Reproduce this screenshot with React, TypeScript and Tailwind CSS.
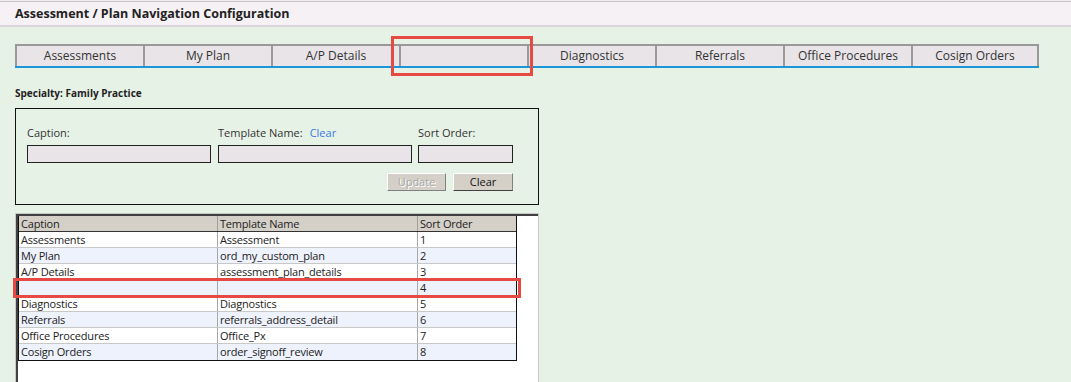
import React from "react";

const tabs = ["Assessments", "My Plan", "A/P Details", "", "Diagnostics", "Referrals", "Office Procedures", "Cosign Orders"];
const rows: [string, string, string][] = [
  ["Assessments", "Assessment", "1"],
  ["My Plan", "ord_my_custom_plan", "2"],
  ["A/P Details", "assessment_plan_details", "3"],
  ["", "", "4"],
  ["Diagnostics", "Diagnostics", "5"],
  ["Referrals", "referrals_address_detail", "6"],
  ["Office Procedures", "Office_Px", "7"],
  ["Cosign Orders", "order_signoff_review", "8"],
];

export default function App() {
  return (
    <div className="relative w-[1071px] h-[382px] overflow-hidden bg-[#e7f2e6]" style={{ fontFamily: '"Open Sans", "DejaVu Sans", sans-serif' }}>
      <div className="bg-[#f0eef0] pt-px">
        <div className="h-[26px] bg-[#f6f1f5] border-t border-b-2 border-t-[#c9c3c9] border-b-[#dcd4dc] flex items-center pl-[15px] pt-[2px]">
          <span className="text-[12.5px] font-bold text-[#222]">Assessment / Plan Navigation Configuration</span>
        </div>
      </div>

      <div className="pl-[15px] pt-[17px]">
        <div className="flex w-[1024px] border-b-2 border-[#1a96d8]">
          {tabs.map((t, i) => (
            <div
              key={i}
              className={`w-[128px] h-[22px] bg-[#e8e4e8] border-t-2 border-l-2 border-[#999999] flex items-center justify-center text-[12px] text-[#333] ${i === tabs.length - 1 ? "border-r-2" : ""}`}
            >
              {t}
            </div>
          ))}
        </div>

        <div className="mt-[18px] text-[10px] font-bold text-[#222] leading-[14px]">Specialty: Family Practice</div>

        <div className="mt-[8px] w-[524px] h-[97px] border border-[#111] pl-[11px] pt-[17px]">
          <div className="flex text-[11px] text-[#333] leading-[14px]">
            <div className="w-[191px]">Caption:</div>
            <div className="w-[200px] flex gap-[7px]">
              <span>Template Name:</span>
              <span className="text-[#3a78e6]">Clear</span>
            </div>
            <div>Sort Order:</div>
          </div>
          <div className="flex mt-[5px]">
            <div className="w-[184px] h-[18px] bg-[#e8e4e8] border border-[#222]" />
            <div className="ml-[7px] w-[194px] h-[18px] bg-[#e8e4e8] border border-[#222]" />
            <div className="ml-[6px] w-[95px] h-[18px] bg-[#e8e4e8] border border-[#222]" />
          </div>
          <div className="flex mt-[10px] ml-[360px] gap-[7px]">
            <div className="w-[59px] h-[18px] bg-[#d4d0c8] border border-t-white border-l-white border-r-[#808080] border-b-[#808080] flex items-center justify-center text-[11px] text-[#a8a8a8]" style={{ textShadow: "1px 1px 0 #fff" }}>
              Update
            </div>
            <div className="w-[60px] h-[18px] bg-[#d4d0c8] border border-t-white border-l-white border-r-[#808080] border-b-[#404040] flex items-center justify-center text-[11px] text-[#111]">
              Clear
            </div>
          </div>
        </div>

        <div className="mt-[8px] w-[524px] h-[200px] border border-[#c8c8c8] bg-white">
          <div className="border-t-2 border-l-2 border-[#404040] h-full">
            <div className="w-[499px] border-l border-r border-b border-[#111] text-[11px] tracking-[-0.2px] text-[#222] leading-[15px]">
              <div className="flex bg-[#d4d0c8] h-[16px] border-b border-[#333]">
                <div className="w-[199px] pl-[2px] border-r border-[#a0a0a0]">Caption</div>
                <div className="w-[200px] pl-[2px] border-r border-[#a0a0a0]">Template Name</div>
                <div className="flex-1 pl-[2px]">Sort Order</div>
              </div>
              {rows.map((r, i) => (
                <div key={i} className={`flex h-[16px] ${i < rows.length - 1 ? "border-b" : ""} border-[#c8c8c8] ${i % 2 === 1 ? "bg-[#eef2fc]" : "bg-white"}`}>
                  <div className="w-[199px] pl-[2px] border-r border-[#a8a8a8]">{r[0]}</div>
                  <div className="w-[200px] pl-[2px] border-r border-[#a8a8a8]">{r[1]}</div>
                  <div className="flex-1 pl-[2px]">{r[2]}</div>
                </div>
              ))}
            </div>
          </div>
        </div>
      </div>

      <div className="absolute left-[391px] top-[36px] w-[142px] h-[40px] border-[3px] border-[#e64a42]" />
      <div className="absolute left-[13px] top-[278px] w-[508px] h-[20px] border-[3px] border-[#e64a42]" />
    </div>
  );
}
